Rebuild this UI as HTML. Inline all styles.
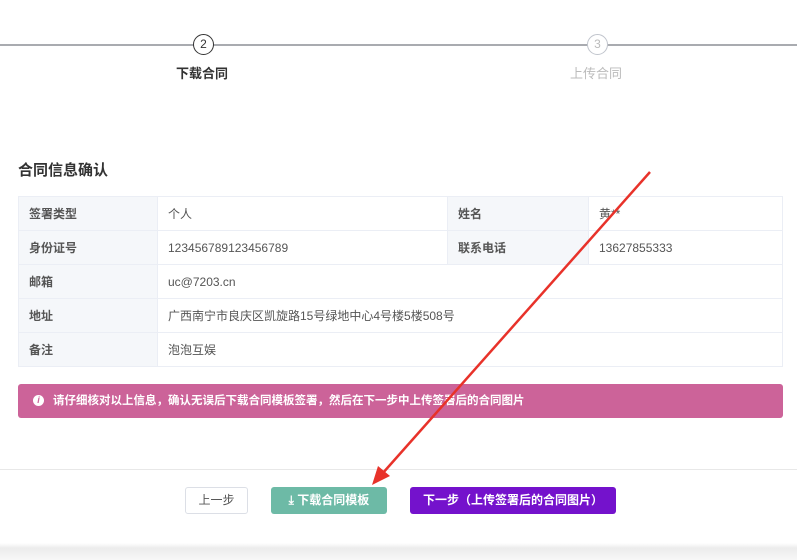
<!DOCTYPE html>
<html><head><meta charset="utf-8"><style>
*{box-sizing:border-box;margin:0;padding:0}
body{width:797px;height:560px;background:#fff;font-family:"Liberation Sans","Noto Sans CJK SC",sans-serif;position:relative;overflow:hidden;color:#333}
.abs{position:absolute}
.line{top:44px;height:2px;background:#a9abb0}
.circ{width:21px;height:21px;border-radius:50%;background:#fff;text-align:center;font-size:12px;line-height:18px}
table{position:absolute;left:18px;top:196px;width:765px;border-collapse:collapse;font-size:12px}
td{border:1px solid #ebeef5;height:34px;padding:0 10px;color:#555}
td.l{background:#f5f7fa;color:#555;font-weight:bold;width:139px}
</style></head><body>
<div class="abs line" style="left:0;width:797px"></div>
<div class="abs circ" style="left:193px;top:34px;border:1.5px solid #333;color:#333">2</div>
<div class="abs circ" style="left:587px;top:34px;border:1.5px solid #c0c4cc;color:#bbb">3</div>
<div class="abs" style="left:176px;top:63px;font-size:13px;font-weight:bold;color:#333">下载合同</div>
<div class="abs" style="left:570px;top:63px;font-size:13px;color:#bbb">上传合同</div>
<div class="abs" style="left:18px;top:159px;font-size:15px;font-weight:bold;color:#333">合同信息确认</div>
<table>
<tr><td class="l">签署类型</td><td style="width:290px">个人</td><td class="l" style="width:141px">姓名</td><td>黄**</td></tr>
<tr><td class="l">身份证号</td><td>123456789123456789</td><td class="l">联系电话</td><td>13627855333</td></tr>
<tr><td class="l">邮箱</td><td colspan="3">uc@7203.cn</td></tr>
<tr><td class="l">地址</td><td colspan="3">广西南宁市良庆区凯旋路15号绿地中心4号楼5楼508号</td></tr>
<tr><td class="l">备注</td><td colspan="3">泡泡互娱</td></tr>
</table>
<div class="abs" style="left:18px;top:384px;width:765px;height:34px;background:#cc6399;border-radius:3px;color:#fff;font-size:11.5px;font-weight:bold;line-height:34px;padding-left:35px">请仔细核对以上信息，确认无误后下载合同模板签署，然后在下一步中上传签署后的合同图片</div>
<div class="abs" style="left:33px;top:395px;width:11px;height:11px;border-radius:50%;background:#fff;color:#cc6399;font-size:9px;font-weight:bold;text-align:center;line-height:11px;font-style:italic">i</div>
<div class="abs" style="left:0;top:469px;width:797px;height:1px;background:#e8e8e8"></div>
<div class="abs" style="left:185px;top:487px;width:63px;height:27px;border:1px solid #dcdfe6;border-radius:3px;font-size:12px;text-align:center;line-height:25px;color:#555">上一步</div>
<div class="abs" style="left:271px;top:487px;width:116px;height:27px;background:#6dbaa6;border-radius:3px;font-size:12px;text-align:center;line-height:27px;color:#fff;font-weight:bold">⤓ 下载合同模板</div>
<div class="abs" style="left:410px;top:487px;width:206px;height:27px;background:#7412cc;border-radius:3px;font-size:12px;text-align:center;line-height:27px;color:#fff;font-weight:bold">下一步（上传签署后的合同图片）</div>
<div class="abs" style="left:0;top:543px;width:797px;height:17px;background:linear-gradient(#fff,#ececec 30%,#f7f7f7)"></div>
<svg class="abs" style="left:0;top:0" width="797" height="560"><line x1="650" y1="172" x2="382" y2="474" stroke="#e8322a" stroke-width="2.5"/><polygon points="372,485 378,466 390,476" fill="#e8322a"/></svg>
</body></html>
